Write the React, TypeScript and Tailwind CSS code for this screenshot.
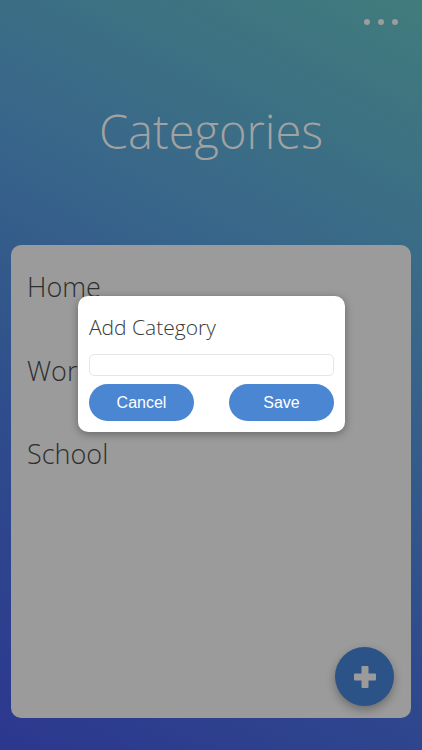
import React from "react";

const categories = ["Home", "Work", "School"];

const App = () => {
  return (
    <div className="relative h-[750px] w-full overflow-hidden bg-[linear-gradient(208deg,#417c7c_0%,#38668a_35%,#2f4d8c_65%,#2c378f_100%)] font-['Open_Sans',sans-serif]">
      <div className="flex flex-col h-full">
        {/* top menu dots */}
        <div className="flex justify-end gap-[8px] pt-[19px] pr-[24px]">
          <span className="w-[6px] h-[6px] rounded-full bg-[#9c9c9c]" />
          <span className="w-[6px] h-[6px] rounded-full bg-[#9c9c9c]" />
          <span className="w-[6px] h-[6px] rounded-full bg-[#9c9c9c]" />
        </div>

        <h1 className="mt-[83px] text-center text-[47px] leading-[47px] font-light text-[#a2a2a2]">
          Categories
        </h1>

        <div className="relative mx-[11px] mt-[90px] mb-[32px] flex-1 rounded-[10px] bg-[#9b9b9b] pl-[16px] pt-[28px]">
          <div className="flex flex-col gap-[56.5px]">
            {categories.map((c) => (
              <p key={c} className="text-[27px] leading-[27px] font-light text-[#2e2e2e]">
                {c}
              </p>
            ))}
          </div>

          <button className="absolute right-[17px] bottom-[12px] flex h-[59px] w-[59px] items-center justify-center rounded-full bg-[#2b5388] shadow-[0_4px_10px_rgba(0,0,0,0.3)]">
            <svg width="22" height="22" viewBox="0 0 22 22">
              <rect x="0" y="7.5" width="22" height="7" rx="1" fill="#9b9b9b" />
              <rect x="7.5" y="0" width="7" height="22" rx="1" fill="#9b9b9b" />
            </svg>
          </button>
        </div>
      </div>

      {/* dialog */}
      <div className="absolute left-[78px] top-[296px] w-[267px] rounded-[10px] bg-white px-[11px] pt-[18px] pb-[11px] shadow-[0_2px_8px_rgba(0,0,0,0.35)]">
        <p className="text-[21px] leading-[26px] font-light text-[#3a3a3a]">Add Category</p>
        <div className="mt-[14px] h-[22px] rounded-[5px] border border-[#e6e6e6] bg-white" />
        <div className="mt-[8px] flex justify-between">
          <button className="h-[37px] w-[105px] rounded-full bg-[#4b86d2] text-[16px] text-white font-['Liberation_Sans',sans-serif]">
            Cancel
          </button>
          <button className="h-[37px] w-[105px] rounded-full bg-[#4b86d2] text-[16px] text-white font-['Liberation_Sans',sans-serif]">
            Save
          </button>
        </div>
      </div>
    </div>
  );
};

export default App;
